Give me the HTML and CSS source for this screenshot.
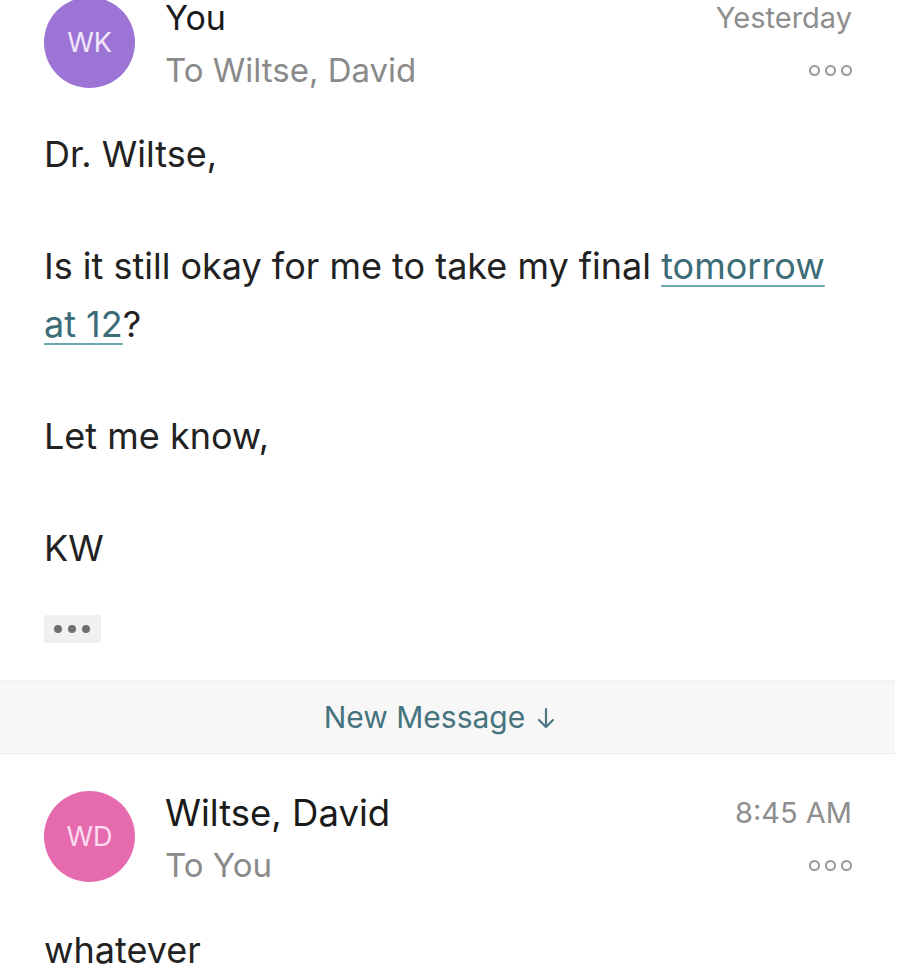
FILE: index.html
```html
<!DOCTYPE html>
<html lang="en">
<head>
  <meta charset="UTF-8">
  <title>Mail Thread</title>
  <link rel="stylesheet" href="styles.css">
</head>
<body>

<div class="thread">
  <div class="message first">
    <div class="header">
      <div class="avatar purple">WK</div>
      <div class="who">
        <div class="from">You</div>
        <div class="to">To Wiltse, David</div>
      </div>
      <div class="meta">
        <div class="time">Yesterday</div>
        <div class="more"><span></span><span></span><span></span></div>
      </div>
    </div>
    <div class="body">
      <p>Dr. Wiltse,</p>
      <p>Is it still okay for me to take my final <a href="#">tomorrow at 12</a>?</p>
      <p>Let me know,</p>
      <p>KW</p>
    </div>
    <div class="quoted"><span></span><span></span><span></span></div>
  </div>

  <div class="new-bar">
    New Message
    <svg class="arrow" width="22" height="24" viewBox="0 0 22 24">
      <path d="M11 3 V21 M4 14 L11 21 L18 14" fill="none" stroke="#4d7883" stroke-width="2.2" stroke-linecap="round" stroke-linejoin="round"/>
    </svg>
  </div>

  <div class="message reply">
    <div class="header">
      <div class="avatar pink">WD</div>
      <div class="who">
        <div class="from">Wiltse, David</div>
        <div class="to">To You</div>
      </div>
      <div class="meta">
        <div class="time">8:45 AM</div>
        <div class="more"><span></span><span></span><span></span></div>
      </div>
    </div>
    <div class="body">
      <p>whatever</p>
    </div>
  </div>
</div>

</body>
</html>
```
FILE: styles.css
```css
body {
  margin: 0;
  font-family: 'Inter', 'Roboto', sans-serif;
  background-color: #fff;
  color: #222;
}
.thread {
  width: 900px;
}
.message {
  padding: 0 48px 0 44px;
}
.header {
  display: flex;
  align-items: flex-start;
}
.avatar {
  width: 91px;
  height: 91px;
  border-radius: 50%;
  font-size: 27px;
  display: flex;
  align-items: center;
  justify-content: center;
  flex-shrink: 0;
}
.avatar.purple {
  background-color: #9b74d6;
  color: #f3e6fb;
  margin-top: -3px;
}
.avatar.pink {
  background-color: #e66aae;
  color: #fcdcef;
}
.who {
  margin-left: 30px;
  flex: 1;
}
.from {
  font-size: 34px;
  line-height: 36px;
  color: #1a1a1a;
}
.reply .from {
  font-size: 36.5px;
}
.to {
  font-size: 33px;
  line-height: 44px;
  margin-top: 12px;
  color: #8a8a8a;
}
.meta {
  display: flex;
  flex-direction: column;
  align-items: flex-end;
}
.time {
  font-size: 29px;
  line-height: 34px;
  margin-top: 1px;
  color: #8e8e8e;
}
.more {
  display: flex;
  gap: 5px;
  margin-top: 30px;
}
.more span {
  width: 7px;
  height: 7px;
  border: 2px solid #999;
  border-radius: 50%;
}
.reply .who,
.reply .meta {
  padding-top: 4px;
}
.body {
  font-size: 36px;
  color: #222;
}
.body p {
  margin: 0;
  line-height: 58px;
}
.body p + p {
  margin-top: 54px;
}
.first .body {
  margin-top: 33px;
}
.reply .body {
  margin-top: 34px;
}
.body a {
  color: #3c6c78;
  text-decoration: underline;
  text-decoration-color: #6aa7b0;
  text-decoration-thickness: 2px;
  text-underline-offset: 6px;
}
.quoted {
  display: inline-flex;
  gap: 6px;
  align-items: center;
  background-color: #f0f0f0;
  padding: 10px 11px 10px 10px;
  margin-top: 38px;
  border-radius: 2px;
}
.quoted span {
  width: 8px;
  height: 8px;
  border-radius: 50%;
  background-color: #707070;
}
.new-bar {
  margin: 37px 5px 37px 0;
  padding-right: 14px;
  background-color: #f7f7f7;
  height: 72px;
  display: flex;
  align-items: center;
  justify-content: center;
  gap: 10px;
  color: #46737e;
  font-size: 30px;
  border-top: 1px solid #f1f1f1;
  border-bottom: 1px solid #ececec;
}
.new-bar .arrow {
  margin-top: 2px;
}
```
